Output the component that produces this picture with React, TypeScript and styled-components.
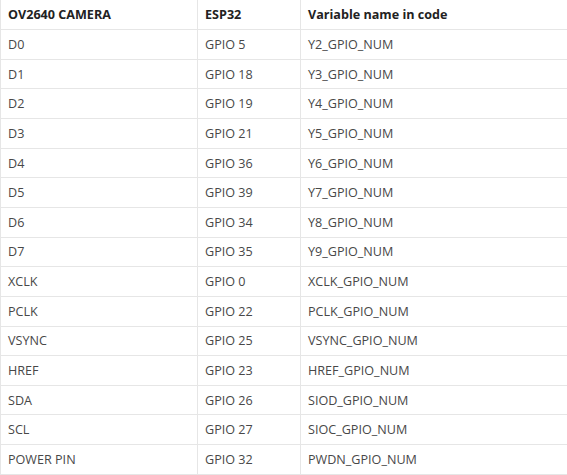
import React from "react";
import styled, { createGlobalStyle } from "styled-components";

const Global = createGlobalStyle`
  html, body { margin: 0; padding: 0; background: #ffffff; }
  body { font-family: "Open Sans", "Noto Sans", sans-serif; }
`;

const Table = styled.table`
  width: 567px;
  table-layout: fixed;
  border-collapse: collapse;
  font-family: "Open Sans", "Noto Sans", sans-serif;
  font-size: 12.6px;
  color: #484848;
`;

const Row = styled.tr`
  height: 29.65px;
`;

const HeadCell = styled.th`
  text-align: left;
  font-weight: 700;
  color: #222222;
  padding: 0 7px;
  border-left: 1px solid #e6e6e6;
  border-right: 1px solid #e6e6e6;
  border-bottom: 1px solid #e6e6e6;
  white-space: nowrap;
`;

const Cell = styled.td`
  padding: 0 7px;
  border: 1px solid #e6e6e6;
  white-space: nowrap;
`;

const rows: [string, string, string][] = [
  ["D0", "GPIO 5", "Y2_GPIO_NUM"],
  ["D1", "GPIO 18", "Y3_GPIO_NUM"],
  ["D2", "GPIO 19", "Y4_GPIO_NUM"],
  ["D3", "GPIO 21", "Y5_GPIO_NUM"],
  ["D4", "GPIO 36", "Y6_GPIO_NUM"],
  ["D5", "GPIO 39", "Y7_GPIO_NUM"],
  ["D6", "GPIO 34", "Y8_GPIO_NUM"],
  ["D7", "GPIO 35", "Y9_GPIO_NUM"],
  ["XCLK", "GPIO 0", "XCLK_GPIO_NUM"],
  ["PCLK", "GPIO 22", "PCLK_GPIO_NUM"],
  ["VSYNC", "GPIO 25", "VSYNC_GPIO_NUM"],
  ["HREF", "GPIO 23", "HREF_GPIO_NUM"],
  ["SDA", "GPIO 26", "SIOD_GPIO_NUM"],
  ["SCL", "GPIO 27", "SIOC_GPIO_NUM"],
  ["POWER PIN", "GPIO 32", "PWDN_GPIO_NUM"],
];

export default function App() {
  return (
    <>
      <Global />
      <Table>
        <colgroup>
          <col style={{ width: 197 }} />
          <col style={{ width: 103 }} />
          <col style={{ width: 267 }} />
        </colgroup>
        <thead>
          <Row>
            <HeadCell>OV2640 CAMERA</HeadCell>
            <HeadCell>ESP32</HeadCell>
            <HeadCell>Variable name in code</HeadCell>
          </Row>
        </thead>
        <tbody>
          {rows.map((r) => (
            <Row key={r[0]}>
              <Cell>{r[0]}</Cell>
              <Cell>{r[1]}</Cell>
              <Cell>{r[2]}</Cell>
            </Row>
          ))}
        </tbody>
      </Table>
    </>
  );
}
